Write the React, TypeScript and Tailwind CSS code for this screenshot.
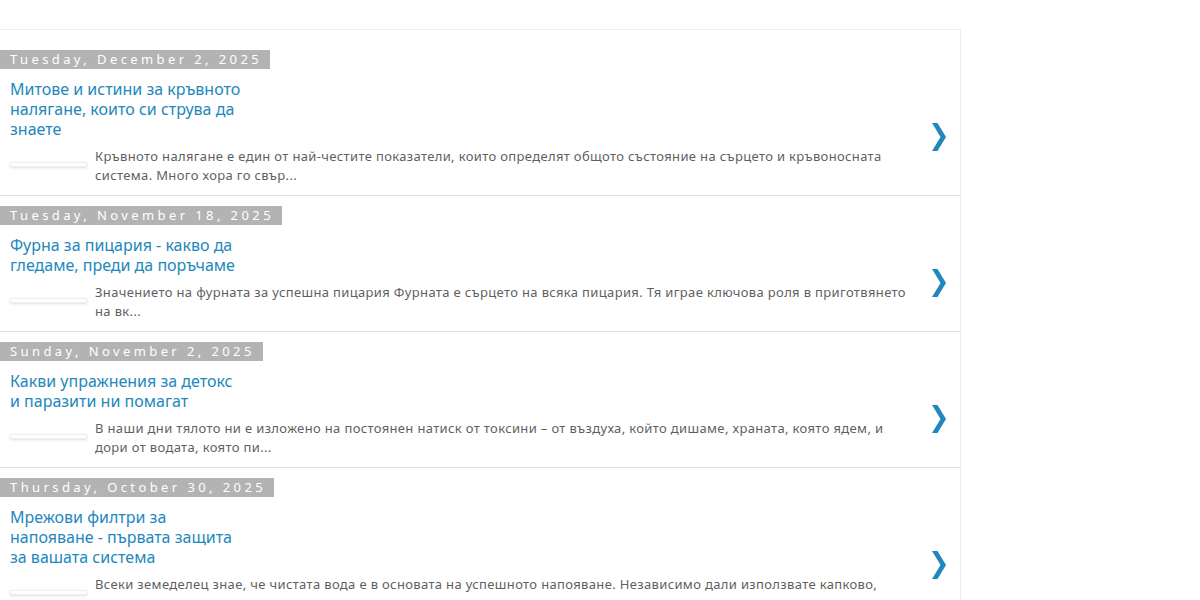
import React from 'react';

interface Post {
  date: string;
  title: string;
  summary: string;
}

const posts: Post[] = [
  {
    date: 'Tuesday, December 2, 2025',
    title: 'Митове и истини за кръвното налягане, които си струва да знаете',
    summary:
      'Кръвното налягане е един от най-честите показатели, които определят общото състояние на сърцето и кръвоносната система. Много хора го свър...',
  },
  {
    date: 'Tuesday, November 18, 2025',
    title: 'Фурна за пицария - какво да гледаме, преди да поръчаме',
    summary:
      'Значението на фурната за успешна пицария Фурната е сърцето на всяка пицария. Тя играе ключова роля в приготвянето на вк...',
  },
  {
    date: 'Sunday, November 2, 2025',
    title: 'Какви упражнения за детокс и паразити ни помагат',
    summary:
      'В наши дни тялото ни е изложено на постоянен натиск от токсини – от въздуха, който дишаме, храната, която ядем, и дори от водата, която пи...',
  },
  {
    date: 'Thursday, October 30, 2025',
    title: 'Мрежови филтри за напояване - първата защита за вашата система',
    summary:
      'Всеки земеделец знае, че чистата вода е в основата на успешното напояване. Независимо дали използвате капково, гравитачно или друго...',
  },
];

function Chevron() {
  return (
    <svg width="14" height="28" viewBox="0 0 14 28" className="mt-[10px]">
      <path d="M0 0 H5.5 L14 14 L5.5 28 H0 L8.5 14 Z" fill="#2288bb" />
    </svg>
  );
}

function PostItem({ post }: { post: Post }) {
  return (
    <div className="border-b border-[#dddddd] pt-[10px] pb-[10px]">
      <div className="w-fit bg-[#b3b3b3] pl-[10px] pr-[8px] text-[13px] leading-[19px] tracking-[3.4px] text-white">
        {post.date}
      </div>
      {/* body: title + summary, chevron on the right */}
      <div className="mt-[10px] flex items-center">
        <div className="min-w-0 flex-1">
          <div className="w-[242px] pl-[10px] text-[16px] leading-[20px] text-[#2288bb]">{post.title}</div>
          <div className="mt-[8px] flex items-start">
            <div className="ml-[10px] mt-[15px] h-[5px] w-[77px] shrink-0 border border-[#eeeeee] bg-white shadow-[0_1px_3px_rgba(0,0,0,0.12)]" />
            <p className="ml-[8px] flex-1 text-[13px] leading-[19px] tracking-[0.35px] text-[#5f5f5f]">
              {post.summary}
            </p>
          </div>
        </div>
        <div className="flex w-[40px] shrink-0 justify-start pl-[12px]">
          <Chevron />
        </div>
      </div>
    </div>
  );
}

export default function App() {
  return (
    <div className="min-h-[600px] bg-white pt-[29px] font-['Noto_Sans',sans-serif]">
      <div className="w-[961px] border-t border-r border-[#eeeeee] pt-[10px]">
        {posts.map((post) => (
          <PostItem key={post.date} post={post} />
        ))}
      </div>
    </div>
  );
}
